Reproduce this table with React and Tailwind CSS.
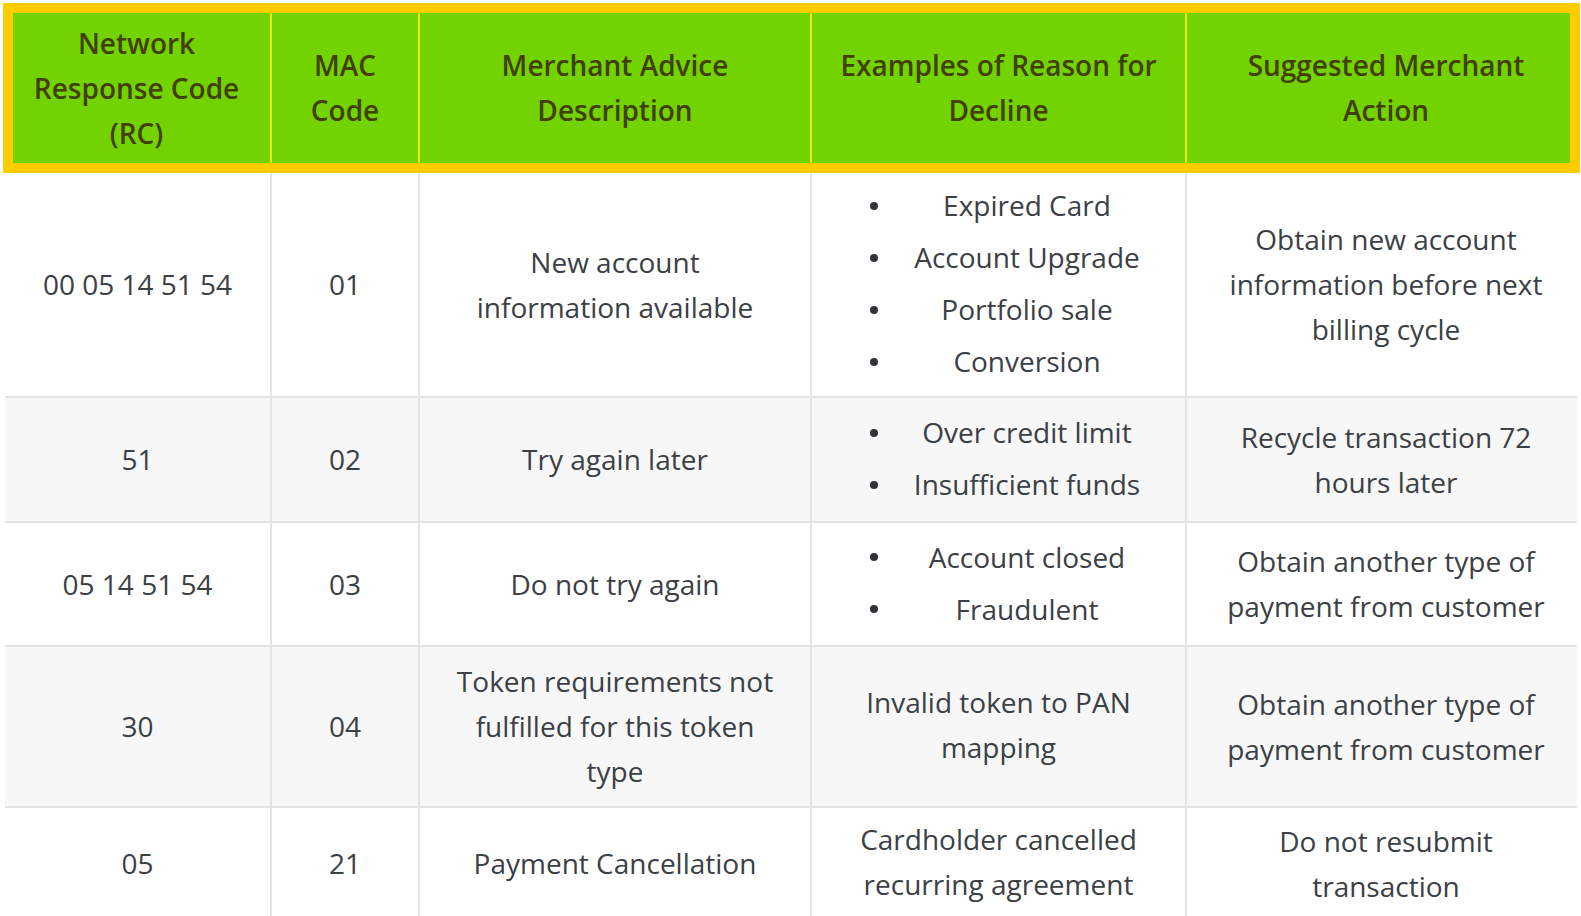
import React from 'react'

const HEAD = [
  { w: 'w-[257px] pr-[10px]', lines: ['Network', 'Response Code', '(RC)'] },
  { w: 'w-[148px]', lines: ['MAC', 'Code'] },
  { w: 'w-[392px]', lines: ['Merchant Advice', 'Description'] },
  { w: 'w-[375px]', lines: ['Examples of Reason for', 'Decline'] },
  { w: 'w-[384px] pl-[16px]', lines: ['Suggested Merchant', 'Action'] },
]

const ROWS = [
  { h: 'h-[223px]', bg: 'bg-white', rc: '00 05 14 51 54', mac: '01', desc: ['New account', 'information available'], reasons: ['Expired Card', 'Account Upgrade', 'Portfolio sale', 'Conversion'], action: ['Obtain new account', 'information before next', 'billing cycle'] },
  { h: 'h-[125px]', bg: 'bg-[#f7f7f7]', rc: '51', mac: '02', desc: ['Try again later'], reasons: ['Over credit limit', 'Insufficient funds'], action: ['Recycle transaction 72', 'hours later'] },
  { h: 'h-[124px]', bg: 'bg-white', rc: '05 14 51 54', mac: '03', desc: ['Do not try again'], reasons: ['Account closed', 'Fraudulent'], action: ['Obtain another type of', 'payment from customer'] },
  { h: 'h-[161px]', bg: 'bg-[#f7f7f7]', rc: '30', mac: '04', desc: ['Token requirements not', 'fulfilled for this token', 'type'], text: ['Invalid token to PAN', 'mapping'], action: ['Obtain another type of', 'payment from customer'] },
  { h: 'h-[113px]', bg: 'bg-white', rc: '05', mac: '21', desc: ['Payment Cancellation'], text: ['Cardholder cancelled', 'recurring agreement'], action: ['Do not resubmit', 'transaction'] },
]

function Lines({ lines }) {
  return (
    <div className="text-center whitespace-nowrap">
      {lines.map((l) => <div key={l}>{l}</div>)}
    </div>
  )
}

export default function App() {
  return (
    <div className="w-[1581px] h-[916px] overflow-hidden bg-white font-['Open_Sans',sans-serif]">

      {/* Header */}
      <div className="mt-[3px] ml-[3px] w-[1577px] border-[10px] border-[#ffcc00]">
        <div className="flex h-[150px] bg-[#72d300] text-[#423f00] font-semibold text-[28px] leading-[45px]">
          {HEAD.map((c, i) => (
            <div
              key={i}
              className={`${c.w} flex items-center justify-center ${i > 0 ? 'border-l-2 border-[#e6ea10]' : ''}`}
            >
              <Lines lines={c.lines} />
            </div>
          ))}
        </div>
      </div>

      {/* Body */}
      <div className="ml-[5px] w-[1572px] text-[#3b4045] text-[28px] leading-[45px]">
        {ROWS.map((r, i) => (
          <div key={i} className={`flex ${r.h} ${r.bg} ${i > 0 ? 'border-t-2 border-[#e4e4e4]' : ''}`}>
            <div className="w-[265px] flex items-center justify-center">
              <Lines lines={[r.rc]} />
            </div>
            <div className="w-[148px] flex items-center justify-center border-l-2 border-[#e4e4e4]">
              <Lines lines={[r.mac]} />
            </div>
            <div className="w-[392px] flex items-center justify-center border-l-2 border-[#e4e4e4]">
              <Lines lines={r.desc} />
            </div>
            <div className="w-[375px] flex items-center justify-center border-l-2 border-[#e4e4e4]">
              {r.reasons ? (
                <ul className="w-full pl-[58px] pr-[15px] -mt-[2px]">
                  {r.reasons.map((t) => (
                    <li key={t} className="flex items-center my-[7px]">
                      <span className="w-[8px] h-[8px] rounded-full bg-[#2f3338] shrink-0" />
                      <span className="flex-1 ml-[6px] text-center whitespace-nowrap">{t}</span>
                    </li>
                  ))}
                </ul>
              ) : (
                <div className="-mt-[3px]">
                  <Lines lines={r.text} />
                </div>
              )}
            </div>
            <div className="w-[392px] pl-[8px] flex items-center justify-center border-l-2 border-[#e4e4e4]">
              <Lines lines={r.action} />
            </div>
          </div>
        ))}
      </div>
    </div>
  )
}
